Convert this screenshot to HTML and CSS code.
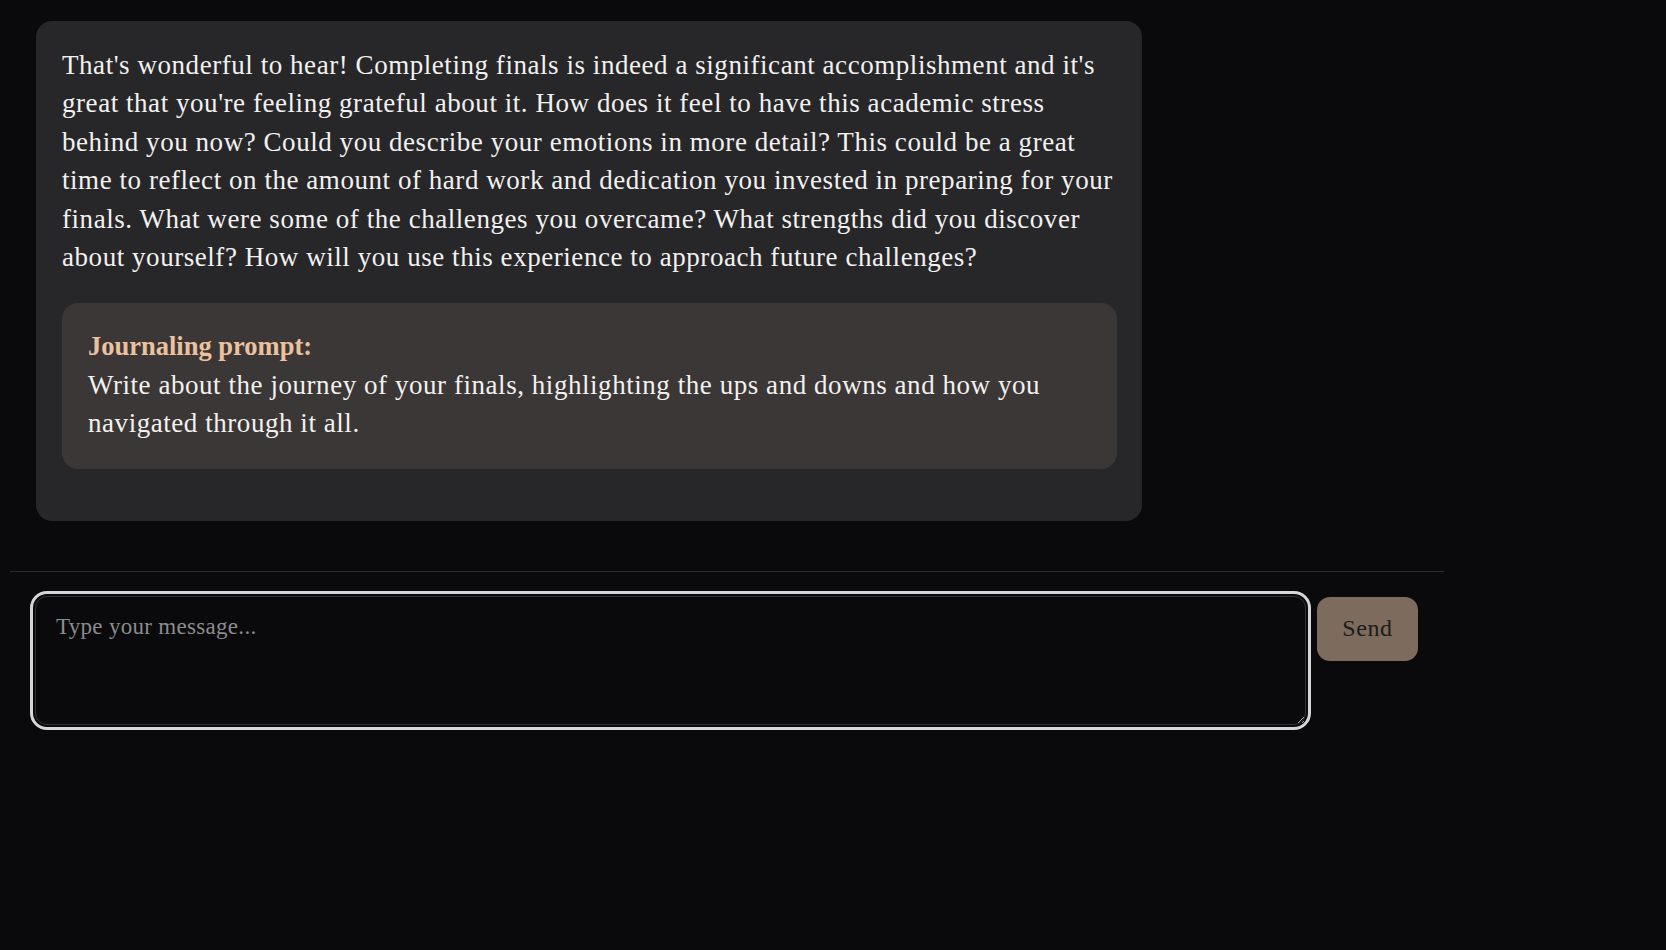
FILE: index.html
```html
<!DOCTYPE html>
<html lang="en">
<head>
<meta charset="utf-8">
<title>Journal Chat</title>
<link rel="stylesheet" href="styles.css">
</head>
<body>
<div class="chat">
  <div class="messages">
    <div class="bubble">
      <p class="reply">That's wonderful to hear! Completing finals is indeed a significant accomplishment and it's great that you're feeling grateful about it. How does it feel to have this academic stress behind you now? Could you describe your emotions in more detail? This could be a great time to reflect on the amount of hard work and dedication you invested in preparing for your finals. What were some of the challenges you overcame? What strengths did you discover about yourself? How will you use this experience to approach future challenges?</p>
      <div class="prompt">
        <div class="prompt-title">Journaling prompt:</div>
        <div class="prompt-text">Write about the journey of your finals, highlighting the ups and downs and how you navigated through it all.</div>
      </div>
    </div>
  </div>
  <div class="composer">
    <textarea class="input" placeholder="Type your message..." autofocus></textarea>
    <button class="send">Send</button>
  </div>
</div>
</body>
</html>
```
FILE: styles.css
```css
html, body {
  margin: 0;
  padding: 0;
  background: #0a0a0c;
  height: 100%;
}
body {
  font-family: "Liberation Serif", "DejaVu Serif", serif;
  color: #f2f1ef;
}
.chat {
  width: 1434px;
  margin-left: 10px;
}
.messages {
  padding: 21px 26px 50px 26px;
  border-bottom: 1px solid #2a2a2d;
}
.bubble {
  width: 1106px;
  box-sizing: border-box;
  background: #27272a;
  border-radius: 16px;
  padding: 25px 25px 25px 26px;
}
.reply {
  margin: 0 0 27px 0;
  font-size: 27px;
  letter-spacing: 0.55px;
  line-height: 38.4px;
}
.prompt {
  background: #3b3736;
  border-radius: 16px;
  padding: 24px 26px 26px 26px;
  margin-bottom: 27px;
  font-size: 27px;
  line-height: 38.4px;
}
.prompt-title {
  color: #ebc29f;
  font-weight: bold;
  font-size: 26.5px;
}
.prompt-text {
  letter-spacing: 0.55px;
}
.composer {
  display: flex;
  align-items: flex-start;
  gap: 11px;
  padding: 24px 25px 0 25px;
}
.input {
  width: 1271px;
  height: 129px;
  box-sizing: border-box;
  background: #0a0a0c;
  border: 1px solid #333336;
  border-radius: 12px;
  outline: 3px solid #d6d6d6;
  outline-offset: 2px;
  padding: 15px 20px;
  font-family: "Liberation Serif", serif;
  font-size: 23px;
  letter-spacing: 0.3px;
  line-height: 30px;
  color: #f2f2f2;
  caret-color: #ffffff;
  resize: vertical;
}
.input::placeholder {
  color: #8c8c8c;
}
.send {
  width: 101px;
  height: 64px;
  margin-top: 1px;
  background: #7d6b5d;
  border: none;
  border-radius: 13px;
  color: #1c1c1c;
  font-family: "Liberation Serif", serif;
  font-size: 24px;
  letter-spacing: 0.6px;
  padding: 0;
  cursor: pointer;
}
```
